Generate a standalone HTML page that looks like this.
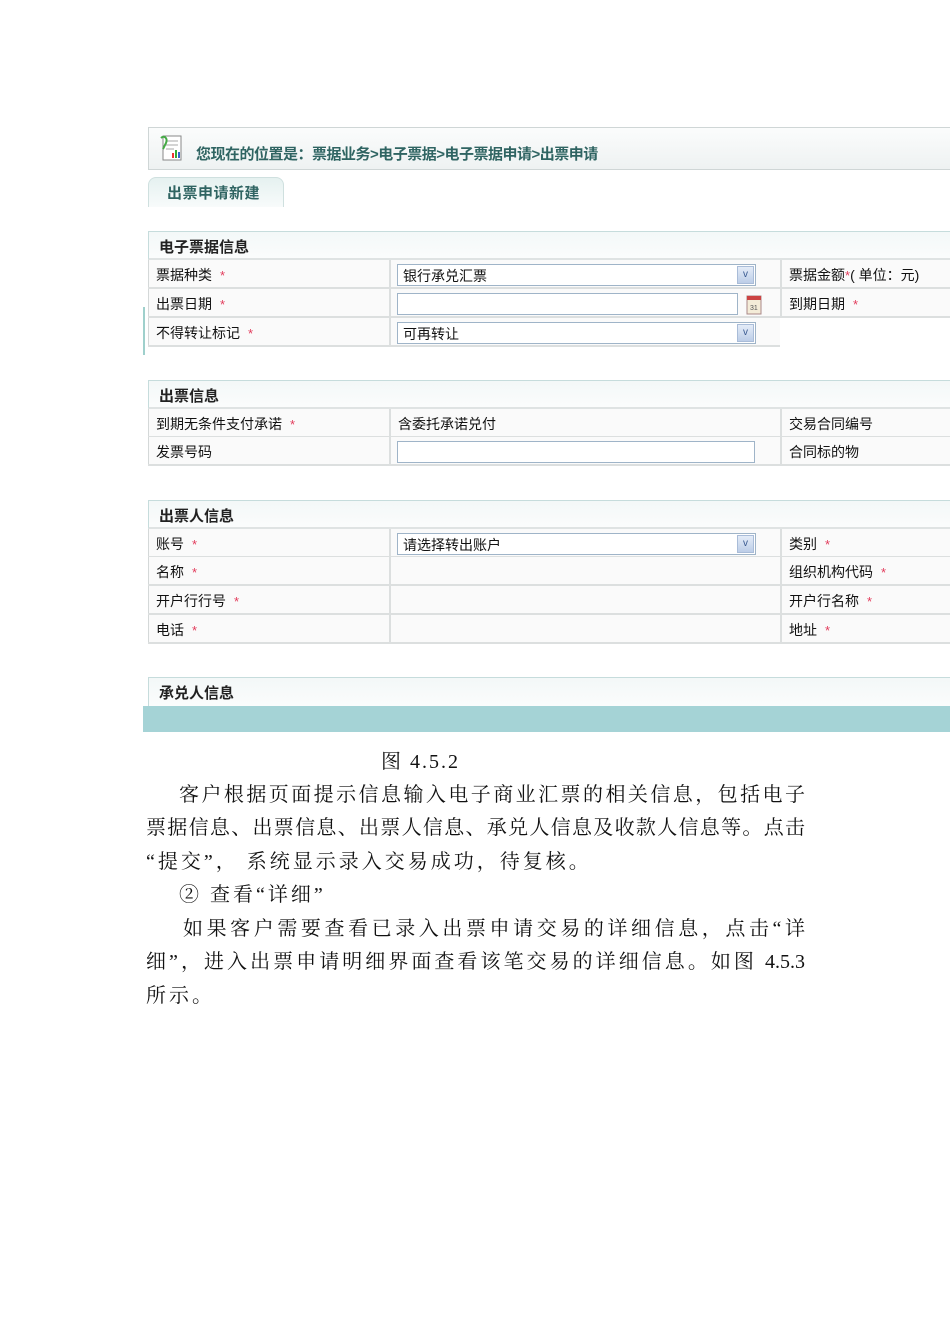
<!DOCTYPE html><html><head><meta charset="utf-8"><style>
*{margin:0;padding:0;box-sizing:border-box}
body{width:950px;height:1344px;background:#fff;position:relative;overflow:hidden;font-family:"Liberation Sans","Noto Sans CJK SC",sans-serif;color:#111}
.a{position:absolute}
.bc{left:148px;top:127px;width:802px;height:43px;border:1px solid #cfd6d6;border-right:none;background:linear-gradient(#fbfcfc,#eef2f2);}
.bct{left:196px;top:143px;font-size:15px;font-weight:bold;color:#2f6462;letter-spacing:-0.5px}
.tab{left:148px;top:177px;width:136px;height:30px;border:1px solid #cfe0df;border-bottom:none;border-radius:8px 8px 0 0;background:linear-gradient(#e5f1f0,#f8fbfb);font-size:15px;font-weight:bold;color:#2f6462;padding:4px 0 0 18px;letter-spacing:0.5px}
.hd{left:148px;width:802px;height:29px;border:1px solid #c6dcdc;border-right:none;border-bottom:2px solid #dfe3e3;background:linear-gradient(#f3f8f8,#fbfcfc);font-size:15px;font-weight:bold;padding:4px 0 0 10px;color:#222}
.row{left:148px;height:29px;border-bottom:2px solid #dcdfdf;background:#fafafa}
.c{position:absolute;top:0;height:27px;font-size:14px;padding:5px 0 0 7px;white-space:nowrap}
.c1{left:0;width:241px;border-left:1px solid #d4d8d8}
.c2{left:241px;width:391px;border-left:2px solid #dcdfdf}
.c3{left:632px;width:170px;border-left:2px solid #dcdfdf}
.s{color:#e23b5b;font-size:13px;margin-left:8px}
.in{position:absolute;left:249px;top:4px;height:22px;border:1px solid #9fb4c8;background:#fff;font-size:14px;padding:1px 0 0 5px}
.dd{position:absolute;right:1px;top:1px;width:17px;height:18px;background:linear-gradient(#e4ecf8,#bccde8);border:1px solid #a9bcd8;color:#3a5a90;font-size:10px;text-align:center;line-height:16px}
.t{position:absolute;font-family:"Liberation Serif","Noto Serif CJK SC",serif;font-size:20px;white-space:nowrap;color:#111}
.j{text-align:justify;text-align-last:justify;text-justify:inter-character}
</style></head><body>
<div class="a bc"></div>
<svg class="a" style="left:158px;top:134px" width="28" height="30" viewBox="0 0 28 30"><rect x="5" y="2" width="18" height="24" fill="#fff" stroke="#888"/><path d="M8 7h12M8 11h12M8 15h8" stroke="#aaa"/><rect x="14" y="19" width="2" height="5" fill="#e33"/><rect x="17" y="16" width="2" height="8" fill="#3a3"/><rect x="20" y="18" width="2" height="6" fill="#36c"/><path d="M3 4c3-3 7 0 5 5l-3 6" stroke="#4a4" stroke-width="2" fill="none"/></svg>
<div class="a bct">您现在的位置是：票据业务&gt;电子票据&gt;电子票据申请&gt;出票申请</div>
<div class="a tab">出票申请新建</div>
<div class="a" style="left:143px;top:307px;width:3px;height:48px;border-left:2px solid #9fd0cc"></div>

<div class="a hd" style="top:231px">电子票据信息</div>
<div class="a row" style="top:260px;width:802px"><div class="c c1">票据种类<span class="s">*</span></div><div class="c c2"></div><div class="c c3">票据金额<span class="s" style="margin:0">*</span>( 单位：元)</div><div class="in" style="width:359px">银行承兑汇票<div class="dd">v</div></div></div>
<div class="a row" style="top:289px;width:802px"><div class="c c1">出票日期<span class="s">*</span></div><div class="c c2"></div><div class="c c3">到期日期<span class="s">*</span></div><div class="in" style="width:341px"></div>
<svg style="position:absolute;left:598px;top:4px" width="16" height="22"><rect x="1" y="3" width="14" height="18" fill="#f4ecd8" stroke="#a88"/><rect x="1" y="3" width="14" height="4" fill="#c44"/><text x="4" y="17" font-size="7" fill="#555">31</text></svg></div>
<div class="a row" style="top:318px;width:632px"><div class="c c1">不得转让标记<span class="s">*</span></div><div class="c c2"></div><div class="in" style="width:359px">可再转让<div class="dd">v</div></div></div>

<div class="a hd" style="top:380px">出票信息</div>
<div class="a row" style="top:409px;width:802px"><div class="c c1">到期无条件支付承诺<span class="s">*</span></div><div class="c c2">含委托承诺兑付</div><div class="c c3">交易合同编号</div></div>
<div class="a row" style="top:437px;width:802px"><div class="c c1">发票号码</div><div class="c c2"></div><div class="c c3">合同标的物</div><div class="in" style="width:358px"></div></div>

<div class="a hd" style="top:500px">出票人信息</div>
<div class="a row" style="top:529px;width:802px"><div class="c c1">账号<span class="s">*</span></div><div class="c c2"></div><div class="c c3">类别<span class="s">*</span></div><div class="in" style="width:359px">请选择转出账户<div class="dd">v</div></div></div>
<div class="a row" style="top:557px;width:802px"><div class="c c1">名称<span class="s">*</span></div><div class="c c2"></div><div class="c c3">组织机构代码<span class="s">*</span></div></div>
<div class="a row" style="top:586px;width:802px"><div class="c c1">开户行行号<span class="s">*</span></div><div class="c c2"></div><div class="c c3">开户行名称<span class="s">*</span></div></div>
<div class="a row" style="top:615px;width:802px"><div class="c c1">电话<span class="s">*</span></div><div class="c c2"></div><div class="c c3">地址<span class="s">*</span></div></div>

<div class="a hd" style="top:677px;height:29px;border-bottom:none">承兑人信息</div>
<div class="a" style="left:143px;top:706px;width:807px;height:26px;background:#a5d3d6"></div>

<div class="t" style="left:381px;top:745px;letter-spacing:2px">图 4.5.2</div>
<div class="t j" style="left:179px;top:778px;width:626px">客户根据页面提示信息输入电子商业汇票的相关信息，包括电子</div>
<div class="t j" style="left:146px;top:811px;width:659px">票据信息、出票信息、出票人信息、承兑人信息及收款人信息等。点击</div>
<div class="t" style="left:146px;top:845px;letter-spacing:3px">“提交”， 系统显示录入交易成功，待复核。</div>
<div class="t" style="left:179px;top:878px;letter-spacing:3px">② 查看“详细”</div>
<div class="t j" style="left:183px;top:912px;width:622px">如果客户需要查看已录入出票申请交易的详细信息，点击“详</div>
<div class="t j" style="left:146px;top:945px;width:659px">细”，进入出票申请明细界面查看该笔交易的详细信息。如图 4.5.3</div>
<div class="t" style="left:146px;top:979px;letter-spacing:3px">所示。</div>
</body></html>
